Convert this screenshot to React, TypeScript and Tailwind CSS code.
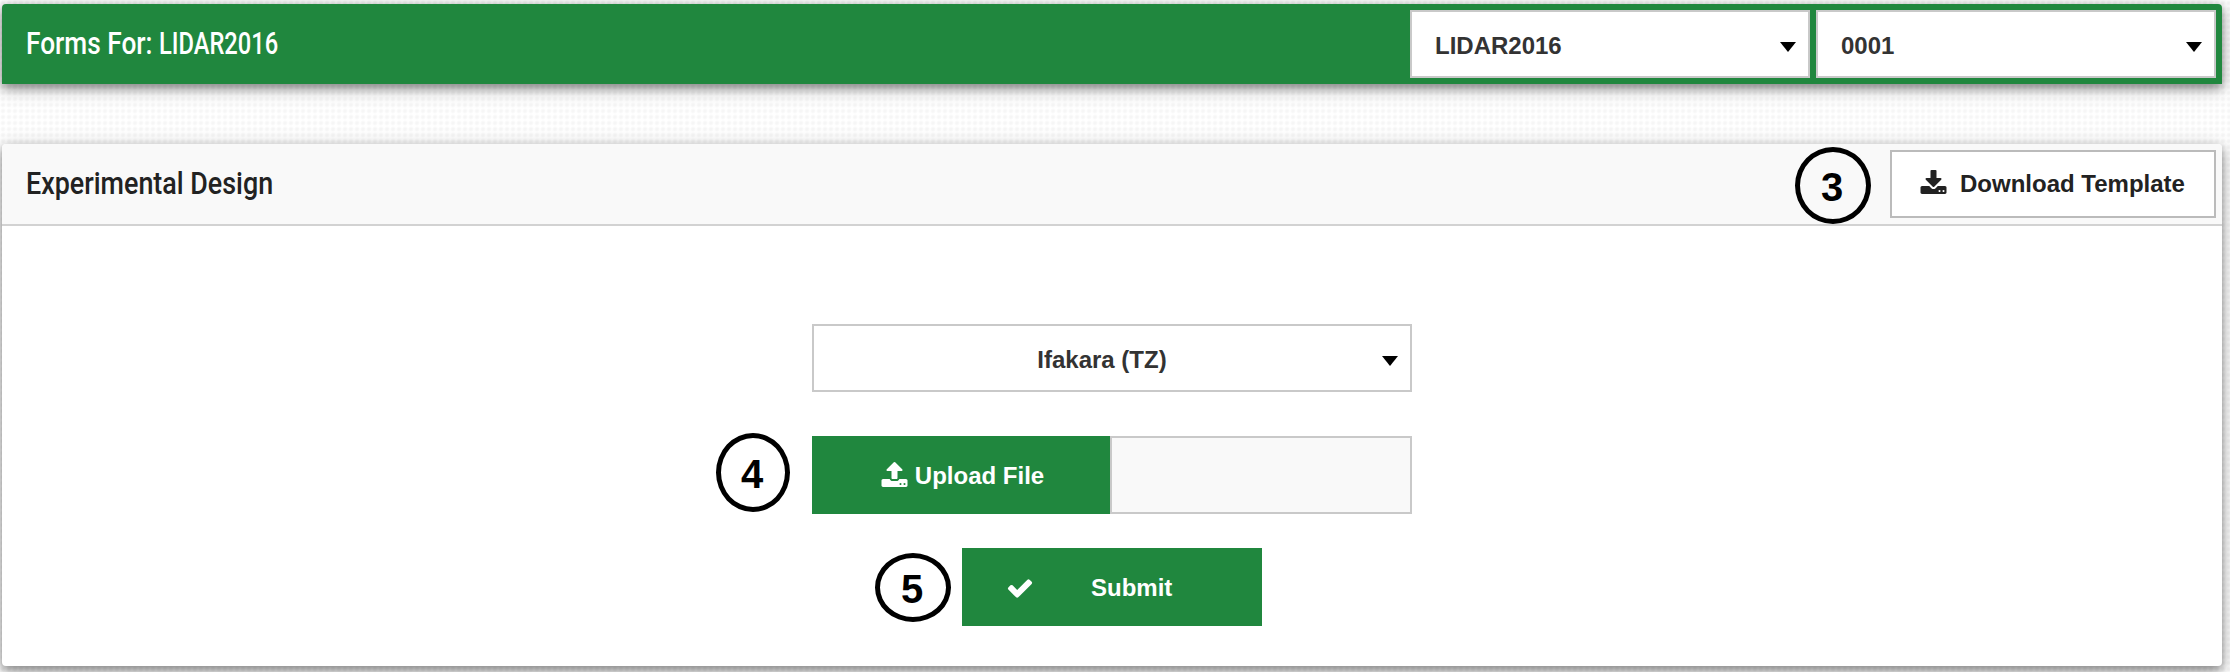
import React from "react";

const DOWNLOAD =
  "M1280 1344q0-26-19-45t-45-19-45 19-19 45 19 45 45 19 45-19 19-45zm256 0q0-26-19-45t-45-19-45 19-19 45 19 45 45 19 45-19 19-45zm128-224v320q0 40-28 68t-68 28h-1472q-40 0-68-28t-28-68v-320q0-40 28-68t68-28h465l135 136q58 56 136 56t136-56l136-136h464q40 0 68 28t28 68zm-325-569q17 41-14 70l-448 448q-18 19-45 19t-45-19l-448-448q-31-29-14-70 17-39 59-39h256v-448q0-26 19-45t45-19h256q26 0 45 19t19 45v448h256q42 0 59 39z";
const UPLOAD =
  "M1280 1472q0-26-19-45t-45-19-45 19-19 45 19 45 45 19 45-19 19-45zm256 0q0-26-19-45t-45-19-45 19-19 45 19 45 45 19 45-19 19-45zm128-224v320q0 40-28 68t-68 28h-1472q-40 0-68-28t-28-68v-320q0-40 28-68t68-28h427q21 56 70.500 92t110.500 36h256q61 0 110.500-36t70.500-92h427q40 0 68 28t28 68zm-325-648q-17 40-59 40h-256v448q0 26-19 45t-45 19h-256q-26 0-45-19t-19-45v-448h-256q-42 0-59-40-17-39 14-69l448-448q18-19 45-19t45 19l448 448q31 30 14 69z";
const CHECK =
  "M1671 566q0 40-28 68l-724 724-136 136q-28 28-68 28t-68-28l-136-136-362-362q-28-28-28-68t28-68l136-136q28-28 68-28t68 28l294 295 656-657q28-28 68-28t68 28l136 136q28 28 28 68z";

function Caret() {
  return (
    <svg viewBox="0 0 16 10" className="mt-[6px] h-[10px] w-[16px] shrink-0">
      <path d="M0 0H16L8 10Z" fill="#000" />
    </svg>
  );
}

function Select({ label }: { label: string }) {
  return (
    <div className="flex h-[68px] w-[400px] items-center justify-between border-2 border-[#c9c9c9] bg-white pr-[12px] pl-[23px] text-[#333]">
      <span className="pt-[3px]">{label}</span>
      <Caret />
    </div>
  );
}

function Step({ n, className }: { n: string; className: string }) {
  return (
    <div
      className={
        "absolute flex items-center justify-center rounded-[50%] border-[5px] border-black pt-[2px] pr-[2px] text-[40px] leading-none text-black " +
        className
      }
    >
      {n}
    </div>
  );
}

export default function App() {
  return (
    <div className="h-[672px] w-[2230px] overflow-hidden bg-white bg-[radial-gradient(circle_at_center,#f6f6f6_1px,#ffffff_3px)] bg-[length:6px_6px] pt-[4px] pl-[2px] font-['Liberation_Sans',Arial,sans-serif] text-[24px] leading-[28px] font-bold">
      <header className="flex h-[80px] w-[2220px] items-center justify-between rounded-t-[4px] bg-[#20873e] pr-[6px] pl-[24px] shadow-[0_4px_10px_rgba(0,0,0,0.36),0_4px_20px_rgba(0,0,0,0.24)]">
        <h1 className="mt-[-2px] flex font-['Roboto',sans-serif] text-[32px] leading-[40px] font-medium whitespace-nowrap text-white">
          <span className="block w-[133px] origin-left scale-x-[0.82] whitespace-pre">Forms For: </span>
          <span className="block origin-left scale-x-[0.74]">LIDAR2016</span>
        </h1>
        <div className="flex gap-[6px]">
          <Select label="LIDAR2016" />
          <Select label="0001" />
        </div>
      </header>

      <section className="relative mt-[60px] h-[522px] w-[2220px] rounded-[4px] bg-white shadow-[0_4px_10px_rgba(0,0,0,0.36),0_4px_20px_rgba(0,0,0,0.24)]">
        <div className="flex h-[82px] items-center justify-between rounded-t-[4px] border-b-2 border-[#d2d2d2] bg-[#f9f9f9] pr-[6px] pl-[24px]">
          <h2 className="mt-[-2px] origin-left scale-x-[0.84] font-['Roboto',sans-serif] text-[32px] leading-[40px] font-medium whitespace-nowrap text-[#222]">
            Experimental Design
          </h2>
          <button className="flex h-[68px] w-[326px] items-center border-2 border-[#bbb] bg-white pl-[28px] text-[#222]">
            <svg viewBox="0 0 1664 1536" className="mt-[-4px] mr-[13px] h-[24px] w-[27px]">
              <path d={DOWNLOAD} fill="currentColor" />
            </svg>
            Download Template
          </button>
        </div>

        <div className="flex flex-col items-center pt-[98px]">
          <div className="flex h-[68px] w-[600px] items-center border-2 border-[#c9c9c9] bg-white pr-[12px] pl-[8px] text-[#333]">
            <span className="grow pt-[3px] text-center">Ifakara (TZ)</span>
            <Caret />
          </div>
          <div className="mt-[44px] flex h-[78px] w-[600px]">
            <button className="flex w-[298px] items-center justify-center gap-[7px] bg-[#20873e] pt-[2px] pl-[3px] text-white">
              <svg viewBox="0 64 1664 1600" className="mt-[-4px] h-[25px] w-[27px]">
                <path d={UPLOAD} fill="currentColor" />
              </svg>
              Upload File
            </button>
            <div className="grow border-2 border-[#c9c9c9] bg-[#f9f9f9]" />
          </div>
          <button className="mt-[34px] flex h-[78px] w-[300px] items-center bg-[#20873e] pt-[2px] pl-[44px] text-white">
            <svg viewBox="0 0 1792 1792" className="h-[28px] w-[28px]">
              <path d={CHECK} fill="currentColor" />
            </svg>
            <span className="ml-[57px]">Submit</span>
          </button>
        </div>

        <Step n="3" className="top-[3px] left-[1793px] h-[77px] w-[76px]" />
        <Step n="4" className="top-[289px] left-[714px] h-[79px] w-[74px]" />
        <Step n="5" className="top-[409px] left-[873px] h-[69px] w-[76px]" />
      </section>
    </div>
  );
}
